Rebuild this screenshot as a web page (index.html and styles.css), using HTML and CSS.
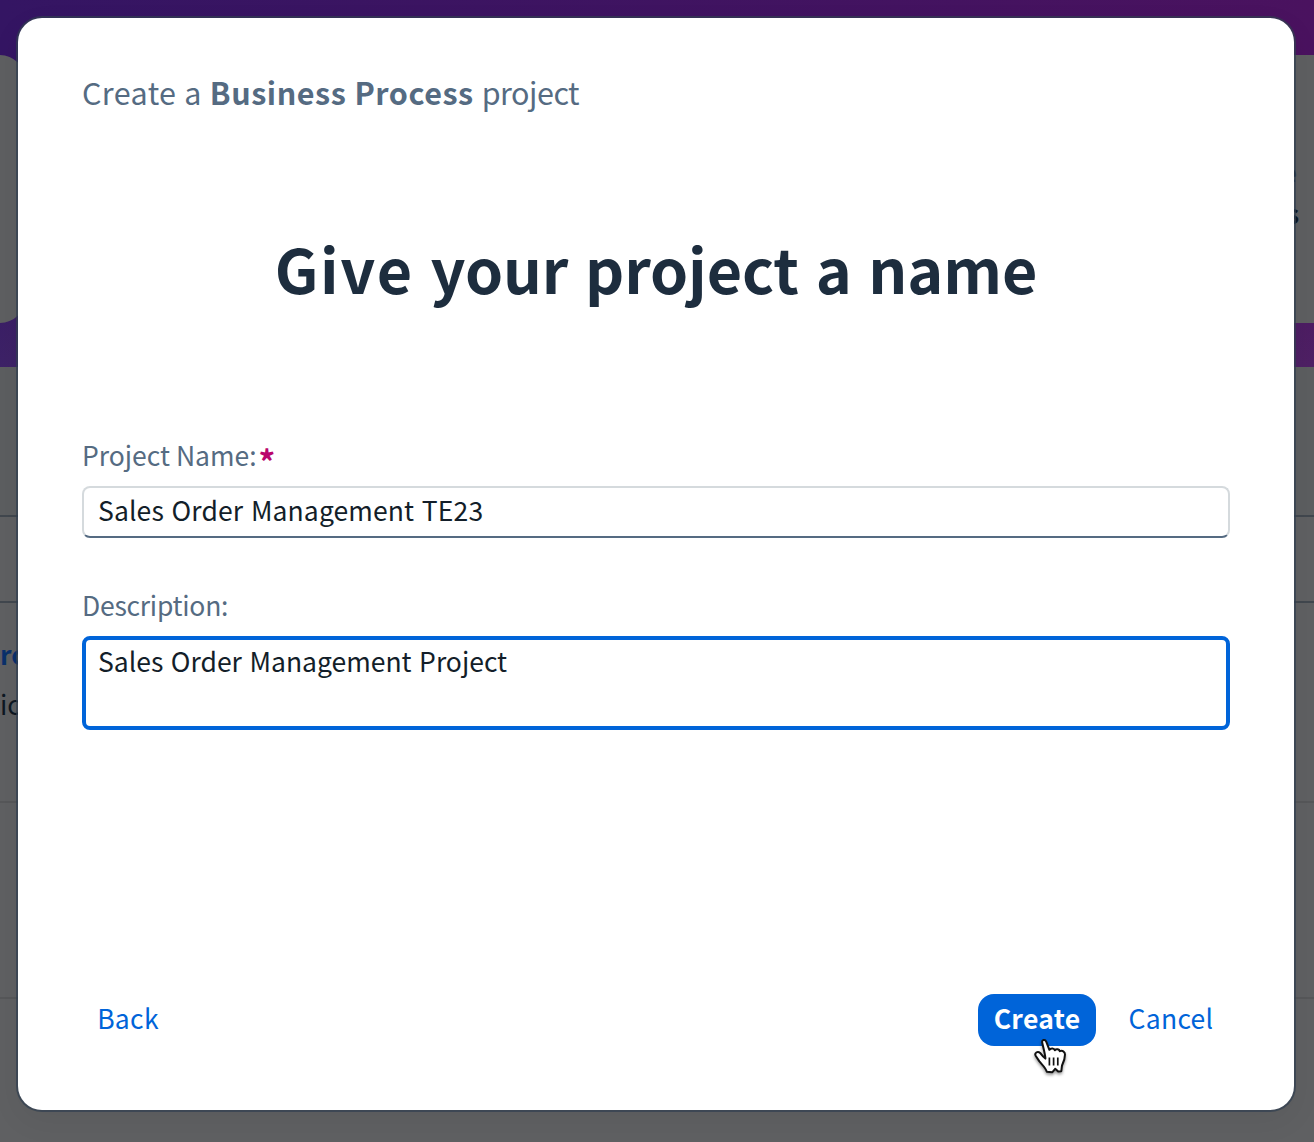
FILE: index.html
```html
<!DOCTYPE html>
<html lang="en">
<head>
<meta charset="utf-8">
<title>Create a Business Process project</title>
<link rel="stylesheet" href="styles.css">
</head>
<body>
<div class="lobby">
  <header class="banner">
    <div class="tile tile-start"></div>
    <div class="tile tile-end"><span>e</span><span>s</span></div>
  </header>
  <div class="toolbar"></div>
  <div class="table-head"></div>
  <div class="table-row"><b class="project-link">ro</b><span class="project-note">ic</span></div>
  <div class="table-row"></div>
</div>

<main class="dialog">
  <p class="crumb">Create a <b>Business Process</b> <span class="crumb-end">project</span></p>
  <h1 class="title"><span class="title-lead">Give</span> your project a name</h1>
  <form class="form">
    <label class="label" for="name">Project Name:<span class="required">*</span></label>
    <input class="input" id="name" type="text" value="Sales Order Management TE23">
    <label class="label label-description" for="description">Description:</label>
    <textarea class="input textarea" id="description">Sales Order Management Project</textarea>
  </form>
  <footer class="footer">
    <button class="button back" type="button">Back</button>
    <button class="button create" type="button">Create</button>
    <button class="button cancel" type="button">Cancel</button>
  </footer>
</main>

<svg class="pointer" viewBox="0 0 36 40" width="36" height="40">
  <path d="M8.2 4.4C7.6 1.6 11.2 1 12.2 3.6L15.4 11.8C17 9.8 20 10 20.8 12.2C22.4 10.6 25.2 11.2 25.8 13.2C28.2 12 31 13.6 31 16.6C31 21.6 29.8 23.8 28 27.4L27.3 33.2L24.2 33.6L21.2 30.8L18.4 34.2L12.8 33.8C11.8 30 8.4 27 5.4 23.4L1.8 18C0 15 3.6 12.6 6.2 15L9.2 18.6L11.4 20.6C11.2 15.6 9 9 8.2 4.4Z"/>
  <path class="pointer-lines" d="M15.4 19.6V27.6M19.6 19.6V27.6M23.8 19.6V27.6"/>
</svg>
</body>
</html>
```
FILE: styles.css
```css
* { box-sizing: border-box; }

body {
  margin: 0;
  height: 1142px;
  overflow: hidden;
  background: #5f6062;
  color: #131e29;
  font-family: "Noto Sans CJK SC", "Open Sans", sans-serif;
  font-size: 26.5px;
}

.banner {
  display: flex;
  justify-content: space-between;
  height: 367px;
  padding: 55px 0 44px;
  background: linear-gradient(180deg, transparent 50%, rgba(90, 75, 115, .25)), linear-gradient(90deg, #341563, #4a125f);
}

.tile { background: #5e5f61; }
.tile-start { width: 25px; border-radius: 0 26px 26px 0; }

.tile-end {
  display: flex;
  flex-direction: column;
  align-items: flex-end;
  width: 40px;
  padding: 96px 15px 0 0;
  line-height: 41px;
  font-weight: 700;
  color: #0d1722;
}
.tile-end span:first-child { padding-right: 2px; }

.toolbar { height: 150px; background: #5c5e60; border-bottom: 2px solid #41474e; }
.table-head { height: 86px; border-bottom: 2px solid #41474e; }

.table-row {
  display: flex;
  flex-direction: column;
  height: 200px;
  padding-top: 26px;
  line-height: 50px;
  border-bottom: 2px solid #565759;
}
.table-row:last-child { height: 196px; }
.project-link { color: #0a306b; }
.project-note { color: #0d1722; }

.dialog {
  position: absolute;
  top: 18px;
  left: 18px;
  display: flex;
  flex-direction: column;
  width: 1276px;
  height: 1092px;
  padding: 54px 64px 64px;
  border-radius: 24px;
  background: #fff;
  box-shadow: 0 0 0 2px rgba(48, 62, 80, .7), 0 10px 32px rgba(0, 0, 0, .06);
}

.crumb {
  margin: 0;
  color: #556b82;
  font-size: 30.5px;
  line-height: 40px;
  letter-spacing: .4px;
  word-spacing: .7px;
}
.crumb b { letter-spacing: .55px; }
.crumb-end { letter-spacing: -.5px; }

.title {
  margin: 116px 0 0;
  color: #1d2d3e;
  font-size: 61px;
  font-weight: 700;
  line-height: 80px;
  letter-spacing: -.1px;
  word-spacing: 3px;
  text-align: center;
}
.title-lead { letter-spacing: 1.7px; }

.form { display: flex; flex-direction: column; margin-top: 130px; }
.label { height: 49px; margin-top: -1px; color: #556b82; line-height: 36px; }
.label-description { margin-top: 49px; letter-spacing: -.25px; }

.required {
  margin-left: 2px;
  color: #ba066c;
  font-size: 33px;
  font-weight: 700;
  line-height: 0;
  vertical-align: -9px;
}

.input {
  width: 1148px;
  height: 52px;
  padding: 0 14px 5px;
  border: 2px solid #d5dadd;
  border-bottom-color: #556b82;
  border-radius: 8px;
  outline: none;
  background: #fff;
  color: #131e29;
  font: inherit;
  letter-spacing: .12px;
  word-spacing: 1.6px;
}

.textarea {
  height: 94px;
  padding: 3px 12px;
  border: 4px solid #0064d9;
  line-height: 36px;
  letter-spacing: 0;
  resize: none;
}

.footer { display: flex; margin-top: auto; }

.button {
  height: 52px;
  padding: 0 0 4px;
  border: 0;
  border-radius: 16px;
  background: none;
  color: #0064d9;
  font: inherit;
  line-height: 48px;
  letter-spacing: .3px;
}
.back { width: 92px; margin-right: auto; }
.create { width: 118px; background: #0064d9; color: #fff; font-weight: 700; }
.cancel { width: 118px; margin-left: 16px; }

.pointer {
  position: absolute;
  top: 1038px;
  left: 1034px;
  fill: #fff;
  stroke: #111;
  stroke-width: 2;
  stroke-linejoin: round;
  filter: drop-shadow(0 2px 1.5px rgba(0, 0, 0, .4));
}
.pointer-lines { fill: none; stroke-width: 1.7; }
```
